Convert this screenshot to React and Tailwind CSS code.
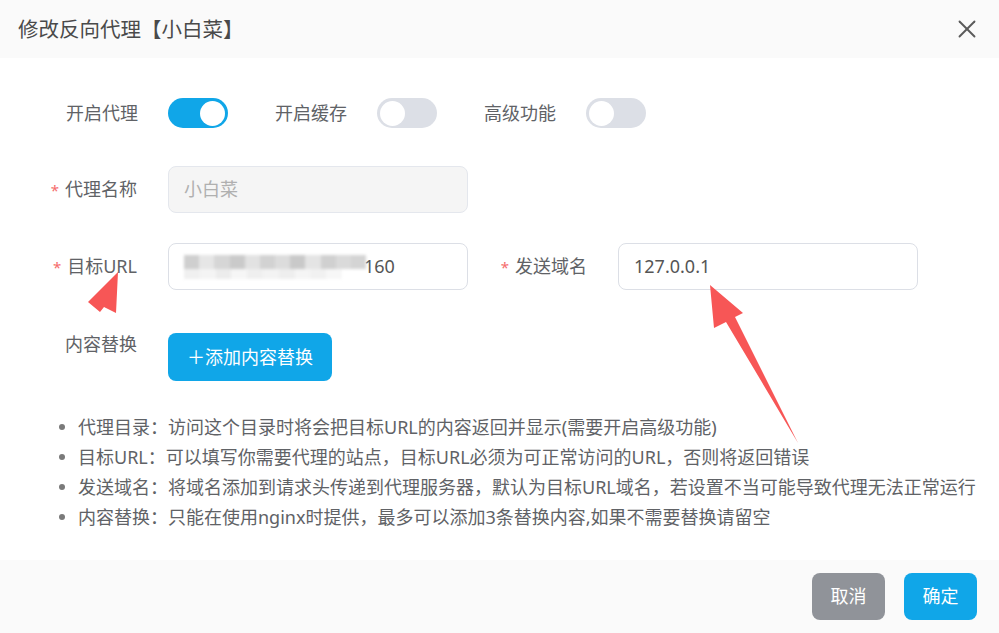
import { X } from "lucide-react";

const font = { fontFamily: '"Noto Sans", "Noto Sans CJK SC", sans-serif' };

function Toggle({ on }) {
  return (
    <div className={`w-[60px] h-[30px] rounded-full flex items-center px-[3px] ${on ? "bg-[#10a6e8] justify-end" : "bg-[#dcdfe6] justify-start"}`}>
      <div className="w-[25px] h-[25px] rounded-full bg-white" />
    </div>
  );
}

function Label({ children, required, className = "" }) {
  return (
    <div className={`shrink-0 text-right pr-[31px] text-[18px] text-[#606266] leading-[22px] ${className}`}>
      {required && <span className="text-[#f56c6c] mr-[6px] text-[15px]">*</span>}
      {children}
    </div>
  );
}

function Blurred() {
  const top = ["#cfcfcf", "#e6e6e6", "#d6d6d6", "#cacaca", "#e2e2e2", "#d2d2d2", "#dcdcdc", "#c9c9c9", "#e4e4e4", "#d0d0d0", "#dadada", "#d4d4d4"];
  const bottom = ["#f0f0f0", "#f4f4f4", "#ececec", "#f6f6f6", "#efefef", "#f3f3f3", "#eeeeee", "#f5f5f5", "#f1f1f1", "#f7f7f7"];
  return (
    <div className="flex flex-col w-[182px] blur-[1.5px]">
      <div className="flex h-[14px]">
        {top.map((c, i) => (
          <div key={i} className="flex-1" style={{ backgroundColor: c }} />
        ))}
      </div>
      <div className="flex h-[10px] pr-[24px]">
        {bottom.map((c, i) => (
          <div key={i} className="flex-1" style={{ backgroundColor: c }} />
        ))}
      </div>
    </div>
  );
}

export default function App() {
  const tips = [
    "代理目录：访问这个目录时将会把目标URL的内容返回并显示(需要开启高级功能)",
    "目标URL：可以填写你需要代理的站点，目标URL必须为可正常访问的URL，否则将返回错误",
    "发送域名：将域名添加到请求头传递到代理服务器，默认为目标URL域名，若设置不当可能导致代理无法正常运行",
    "内容替换：只能在使用nginx时提供，最多可以添加3条替换内容,如果不需要替换请留空",
  ];

  return (
    <div className="relative w-[999px] h-[633px] bg-white flex flex-col overflow-hidden" style={font}>
      {/* header */}
      <div className="h-[58px] shrink-0 bg-[#fafafa] flex items-center justify-between pl-[18px] pr-[17px]">
        <div className="text-[20.5px] text-[#4a4a4a]">修改反向代理【小白菜】</div>
        <X size={30} strokeWidth={1.5} className="text-[#5a5a5a]" />
      </div>

      {/* body */}
      <div className="flex-1 pt-[40px]">
        <div className="flex items-center pl-[66px] h-[30px]">
          <span className="text-[18px] text-[#606266]">开启代理</span>
          <div className="ml-[30px]"><Toggle on /></div>
          <span className="ml-[47px] text-[18px] text-[#606266]">开启缓存</span>
          <div className="ml-[30px]"><Toggle /></div>
          <span className="ml-[47px] text-[18px] text-[#606266]">高级功能</span>
          <div className="ml-[30px]"><Toggle /></div>
        </div>

        <div className="flex items-center mt-[38px]">
          <Label required className="w-[168px]">代理名称</Label>
          <div className="w-[300px] h-[47px] rounded-[8px] border border-[#e4e7ed] bg-[#f5f5f5] flex items-center px-[15px] text-[18px] text-[#b0b0b0]">
            小白菜
          </div>
        </div>

        <div className="flex items-center mt-[30px]">
          <Label required className="w-[168px]">目标URL</Label>
          <div className="w-[300px] h-[47px] rounded-[8px] border border-[#dcdfe6] bg-white flex items-center px-[15px] text-[18px] text-[#555]">
            <Blurred />
            <span className="-ml-[2px]">160</span>
          </div>
          <Label required className="w-[150px]">发送域名</Label>
          <div className="w-[300px] h-[47px] rounded-[8px] border border-[#dcdfe6] bg-white flex items-center px-[15px] text-[18px] text-[#555]">
            127.0.0.1
          </div>
        </div>

        <div className="flex items-start mt-[43px]">
          <Label className="w-[168px]">内容替换</Label>
          <button className="w-[164px] h-[48px] rounded-[8px] bg-[#10a6e8] text-white text-[18px] flex items-center justify-center">
            ＋添加内容替换
          </button>
        </div>

        <ul className="mt-[31px] pl-[59px]">
          {tips.map((t) => (
            <li key={t} className="flex items-center h-[30px] text-[18px] text-[#606266] whitespace-nowrap">
              <span className="w-[6px] h-[6px] rounded-full bg-[#7a7a7a] mr-[13px] shrink-0" />
              {t}
            </li>
          ))}
        </ul>
      </div>

      {/* footer */}
      <div className="h-[73px] shrink-0 bg-[#fafafa] flex items-center justify-end gap-[19px] pr-[22px]">
        <button className="w-[73px] h-[47px] rounded-[8px] bg-[#909399] text-white text-[18px]">取消</button>
        <button className="w-[73px] h-[47px] rounded-[8px] bg-[#10a6e8] text-white text-[18px]">确定</button>
      </div>

      {/* annotation arrows */}
      <svg className="absolute inset-0 pointer-events-none" width="999" height="633">
        <polygon points="118,272 116,313 104,307 100,312 88,302" fill="#f75656" />
        <polygon points="710,285 743,313 735,317 798,443 726,322 714,328" fill="#f75656" />
      </svg>
    </div>
  );
}
